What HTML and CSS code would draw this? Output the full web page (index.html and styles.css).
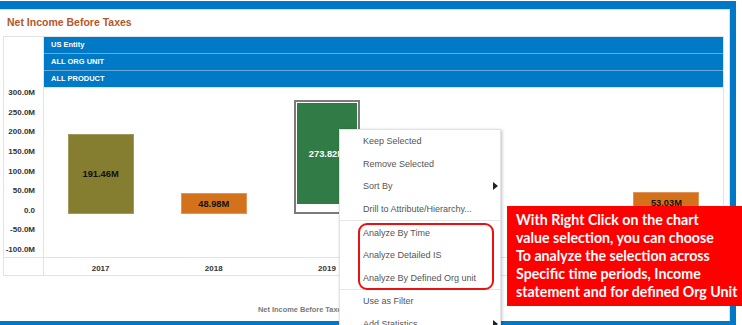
FILE: index.html
```html
<!DOCTYPE html>
<html lang="en">
<head>
  <meta charset="UTF-8">
  <title>Net Income Before Taxes</title>
  <link rel="stylesheet" href="styles.css">
</head>
<body>
<div class="screen">
  <div class="frame">
    <div class="panel">
      <h2 class="title">Net Income Before Taxes</h2>
      <div class="grid">
        <div class="corner"></div>
        <div class="headers">
          <div class="hrow">US Entity</div>
          <div class="hrow">ALL ORG UNIT</div>
          <div class="hrow">ALL PRODUCT</div>
        </div>
        <div class="yaxis">
          <span>300.0M</span>
          <span>250.0M</span>
          <span>200.0M</span>
          <span>150.0M</span>
          <span>100.0M</span>
          <span>50.0M</span>
          <span>0.0</span>
          <span>-50.0M</span>
          <span>-100.0M</span>
        </div>
        <div class="plot">
          <div class="col"><div class="bar olive" style="height: 80px">191.46M</div></div>
          <div class="col"><div class="bar orange" style="height: 21px">48.98M</div></div>
          <div class="col"><div class="bar green selected" style="height: 114px">273.82M</div></div>
          <div class="col"></div>
          <div class="col"></div>
          <div class="col"><div class="bar orange" style="height: 22px">53.03M</div></div>
        </div>
        <div class="corner-b"></div>
        <div class="xaxis">
          <span>2017</span>
          <span>2018</span>
          <span>2019</span>
          <span>2020</span>
          <span></span>
          <span></span>
        </div>
      </div>
      <div class="legend">Net Income Before Taxes</div>
    </div>
  </div>

  <div class="menu">
    <div class="item">Keep Selected</div>
    <div class="item">Remove Selected</div>
    <div class="item">Sort By <span class="arrow"></span></div>
    <div class="item">Drill to Attribute/Hierarchy...</div>
    <div class="sep"></div>
    <div class="item">Analyze By Time</div>
    <div class="item">Analyze Detailed IS</div>
    <div class="item">Analyze By Defined Org unit</div>
    <div class="sep"></div>
    <div class="item">Use as Filter</div>
    <div class="item">Add Statistics <span class="arrow"></span></div>
  </div>

  <div class="highlight"></div>

  <div class="callout">
    With Right Click on the chart<br>
    value selection, you can choose<br>
    To analyze the selection across<br>
    Specific time periods, Income<br>
    statement and for defined Org Unit
  </div>
</div>
</body>
</html>
```

FILE: styles.css
```css
* {
  box-sizing: border-box;
}

html, body {
  margin: 0;
  padding: 0;
  background: #fff;
  overflow: hidden;
  font-family: "Liberation Sans", Arial, sans-serif;
}

.screen {
  position: relative;
  width: 742px;
  height: 325px;
  overflow: hidden;
}

.frame {
  width: 736px;
  height: 324px;
  margin-top: 1px;
  border-top: 8px solid #0078c8;
  border-right: 6px solid #0078c8;
  border-bottom: 4px solid #0078c8;
}

.panel {
  height: 100%;
  border-top: 1px solid #cfe0ef;
  border-right: 1px solid #d5e3ee;
}

.title {
  margin: 0;
  padding: 6px 0 0 7px;
  font-size: 10.5px;
  line-height: 13px;
  font-weight: bold;
  color: #b5562b;
}

/* chart table */
.grid {
  display: grid;
  grid-template-columns: 40px 1fr;
  grid-template-rows: 51px 169px 18px;
  width: 721px;
  margin: 7px 0 0 3px;
  border: 1px solid #e3e3e3;
}

.corner, .yaxis, .corner-b {
  border-right: 1px solid #e3e3e3;
}

.headers {
  display: flex;
  flex-direction: column;
}

.hrow {
  height: 17px;
  padding-left: 7px;
  background: #0079c6;
  border-bottom: 1px solid #6aa8d9;
  color: #fff;
  font-size: 7.5px;
  font-weight: bold;
  line-height: 16px;
}

.hrow:last-child {
  border-bottom-color: #d3e4f1;
}

.yaxis {
  display: flex;
  flex-direction: column;
  justify-content: space-between;
  padding: 0 8px 2px 0;
  text-align: right;
  font-size: 8px;
  font-weight: bold;
  line-height: 10px;
  color: #333;
}

.plot {
  display: flex;
}

.col {
  flex: 1;
  display: flex;
  flex-direction: column;
  justify-content: flex-end;
  align-items: center;
  padding-bottom: 43px;
}

.bar {
  width: 66px;
  display: flex;
  align-items: center;
  justify-content: center;
  font-size: 9.3px;
  font-weight: bold;
  color: #111;
}

.olive {
  background: #857d2f;
  border: 1px solid #a29a5a;
}

.orange {
  background: #d4711b;
  border: 1px solid #e0955a;
}

.green {
  background: #317b47;
  color: #fff;
}

.selected {
  border: 2px solid #7b7b7b;
  padding: 1px;
  background-clip: content-box;
  box-shadow: inset 0 0 0 1px #fff;
  padding-bottom: 8px;
}

.corner-b, .xaxis {
  border-top: 1px solid #e3e3e3;
}

.xaxis {
  display: flex;
}

.xaxis span {
  flex: 1;
  text-align: center;
  padding-top: 5px;
  font-size: 8px;
  font-weight: bold;
  line-height: 12px;
  color: #333;
}

.legend {
  margin-top: 29px;
  padding-left: 258px;
  font-size: 7.4px;
  font-weight: bold;
  line-height: 10px;
  color: #7a7a7a;
}

/* right click menu */
.menu {
  position: absolute;
  left: 339px;
  top: 129px;
  width: 162px;
  height: 220px;
  background: #fff;
  border: 1px solid #e2e2e2;
  box-shadow: 1px 1px 3px rgba(0, 0, 0, 0.25);
}

.item {
  display: flex;
  justify-content: space-between;
  align-items: center;
  height: 22.6px;
  padding: 0 2px 0 23px;
  font-size: 9px;
  color: #555;
}

.arrow {
  width: 0;
  height: 0;
  border-left: 5px solid #222;
  border-top: 4px solid transparent;
  border-bottom: 4px solid transparent;
}

.sep {
  height: 1px;
  background: #e6e6e6;
}

.highlight {
  position: absolute;
  left: 358px;
  top: 223px;
  width: 136px;
  height: 67px;
  border: 2.5px solid #ec1010;
  border-radius: 9px;
}

.callout {
  position: absolute;
  left: 507px;
  top: 206px;
  width: 235px;
  height: 100px;
  padding: 5px 0 0 9px;
  background: #ff0000;
  color: #fff;
  font-family: Lato, "Liberation Sans", sans-serif;
  font-size: 14.2px;
  font-weight: bold;
  line-height: 18px;
  white-space: nowrap;
}
```
